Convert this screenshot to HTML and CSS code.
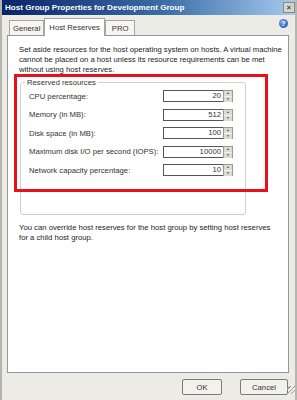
FILE: index.html
```html
<!DOCTYPE html>
<html lang="en">
<head>
    <meta charset="UTF-8">
    <title>Host Group Properties</title>
    <link rel="stylesheet" href="styles.css">
</head>
<body>
    <div class="dialog">
        <div class="titlebar">
            <span class="title">Host Group Properties for Development Group</span>
            <span class="close-btn">&#x2715;</span>
        </div>

        <div class="tab-row">
            <div class="tabs">
                <span class="tab">General</span>
                <span class="tab tab-active">Host Reserves</span>
                <span class="tab">PRO</span>
            </div>
            <span class="help-icon">?</span>
        </div>

        <div class="panel">
            <p class="intro">Set aside resources for the host operating system on hosts. A virtual machine cannot be placed on a host unless its resource requirements can be met without using host reserves.</p>

            <div class="group-wrap">
                <fieldset class="group">
                    <legend>Reserved resources</legend>
                    <div class="field-row">
                        <label>CPU percentage:</label>
                        <div class="spin"><span class="spin-value">20</span><span class="spin-btns"><i>&#9650;</i><i>&#9660;</i></span></div>
                    </div>
                    <div class="field-row">
                        <label>Memory (in MB):</label>
                        <div class="spin"><span class="spin-value">512</span><span class="spin-btns"><i>&#9650;</i><i>&#9660;</i></span></div>
                    </div>
                    <div class="field-row">
                        <label>Disk space (in MB):</label>
                        <div class="spin"><span class="spin-value">100</span><span class="spin-btns"><i>&#9650;</i><i>&#9660;</i></span></div>
                    </div>
                    <div class="field-row">
                        <label>Maximum disk I/O per second (IOPS):</label>
                        <div class="spin"><span class="spin-value">10000</span><span class="spin-btns"><i>&#9650;</i><i>&#9660;</i></span></div>
                    </div>
                    <div class="field-row">
                        <label>Network capacity percentage:</label>
                        <div class="spin"><span class="spin-value">10</span><span class="spin-btns"><i>&#9650;</i><i>&#9660;</i></span></div>
                    </div>
                </fieldset>
                <!-- red highlight drawn over the group box -->
                <div class="highlight"></div>
            </div>

            <p class="note">You can override host reserves for the host group by setting host reserves for a child host group.</p>
        </div>

        <div class="footer">
            <button class="btn">OK</button>
            <button class="btn">Cancel</button>
            <span class="grip"></span>
        </div>
    </div>
</body>
</html>
```

FILE: styles.css
```css
* {
    margin: 0;
    padding: 0;
    box-sizing: border-box;
}

body {
    font-family: 'Liberation Sans', Arial, sans-serif;
    font-size: 7.7px;
    color: #222;
    background-color: #ecebe6;
}

.dialog {
    width: 297px;
    height: 400px;
    background-color: #ecebe6;
    border-left: 2px solid #b5b5ae;
    border-right: 2px solid #b5b5ae;
    display: flex;
    flex-direction: column;
}

.titlebar {
    height: 15px;
    display: flex;
    align-items: center;
    justify-content: space-between;
    padding: 0 0 0 3px;
    background: linear-gradient(to right, #0a246a 0%, #3a6ea5 55%, #a6caf0 100%);
}

.title {
    color: #fff;
    font-weight: bold;
    font-size: 8.1px;
}

.close-btn {
    width: 12px;
    height: 11px;
    background-color: #d8d6ce;
    border: 1px solid #8a8a84;
    color: #333;
    font-size: 7px;
    line-height: 9px;
    text-align: center;
}

.tab-row {
    display: flex;
    justify-content: space-between;
    align-items: flex-end;
    height: 20px;
    padding: 0 7px 0 7px;
}

.tabs {
    display: flex;
    align-items: flex-end;
}

.tab {
    height: 15px;
    padding: 3px 3px 0 3px;
    background-color: #f6f5f1;
    border: 1px solid #a6a6a0;
    border-bottom: none;
    color: #333;
}

.tab:last-child {
    padding: 3px 6px 0 6px;
}

.tab-active {
    height: 18px;
    padding: 4px 4px 0 4px;
    background-color: #fff;
    margin-bottom: -1px;
    position: relative;
    z-index: 1;
}

.help-icon {
    width: 9px;
    height: 9px;
    margin-bottom: 7px;
    border-radius: 50%;
    background: radial-gradient(circle at 35% 35%, #6f9ee8, #1d4fb0);
    color: #fff;
    font-weight: bold;
    font-size: 7px;
    line-height: 9px;
    text-align: center;
}

.panel {
    height: 338px;
    margin: 0 6px 0 5px;
    background-color: #fff;
    border: 1px solid #919b9c;
    padding: 9px 2px 0 11px;
}

.intro {
    line-height: 10px;
}

.group-wrap {
    position: relative;
    margin-top: 3px;
}

.group {
    width: 226px;
    height: 137px;
    margin-left: 1px;
    border: 1px solid #d0d0c8;
    border-radius: 3px;
    padding: 0 12px 0 8px;
}

.group legend {
    padding: 0 2px;
    margin-left: -4px;
    color: #333;
}

.field-row {
    display: flex;
    align-items: center;
    justify-content: space-between;
    height: 18.5px;
}

.field-row label {
    color: #333;
    white-space: nowrap;
}

.spin {
    display: flex;
    width: 70px;
    height: 12px;
}

.spin-value {
    flex: 1;
    border: 1px solid #555;
    border-right: none;
    background-color: #fff;
    text-align: right;
    padding-right: 2px;
    line-height: 10px;
    color: #333;
}

.spin-btns {
    width: 10px;
    display: flex;
    flex-direction: column;
    border: 1px solid #9a9a94;
}

.spin-btns i {
    flex: 1;
    background-color: #dcdad2;
    font-style: normal;
    font-size: 3px;
    line-height: 5px;
    text-align: center;
    color: #333;
}

.spin-btns i + i {
    border-top: 1px solid #f4f4f0;
}

.highlight {
    position: absolute;
    left: -5px;
    top: -4px;
    width: 254px;
    height: 118px;
    border: 3px solid #e8101a;
}

.note {
    margin-top: 8px;
    padding-right: 10px;
    line-height: 10px;
}

.footer {
    position: relative;
    display: flex;
    justify-content: flex-end;
    gap: 18px;
    padding: 6px 7px 0 0;
}

.btn {
    width: 40px;
    height: 16px;
    background-color: #f2f1ec;
    border: 1px solid #7b7b76;
    border-radius: 2px;
    font-family: 'Liberation Sans', Arial, sans-serif;
    font-size: 7.7px;
    color: #333;
}

.btn + .btn {
    width: 48px;
}

.grip {
    position: absolute;
    right: 0;
    bottom: 1px;
    width: 8px;
    height: 8px;
    background: repeating-linear-gradient(135deg, transparent 0 2px, #9a9a94 2px 3px);
}
```
